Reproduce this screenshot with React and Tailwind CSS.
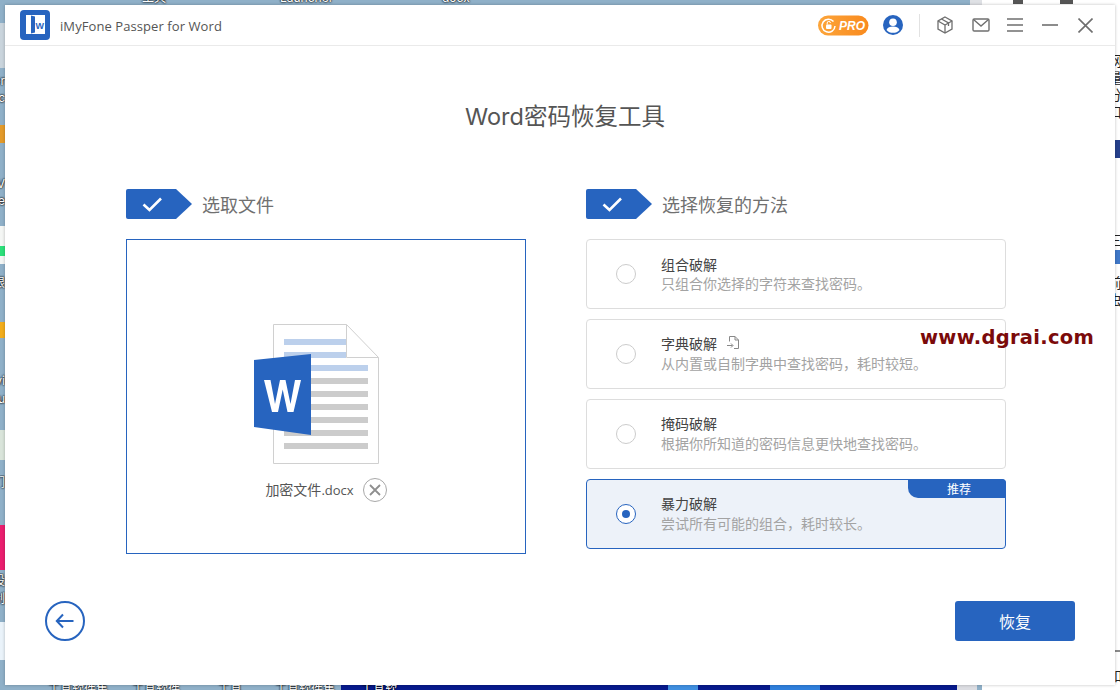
const FONT = "font-['Inter','Noto_Sans_CJK_SC',sans-serif]";

function Check() {
  return (
    <svg width="66" height="30" viewBox="0 0 66 30" className="shrink-0">
      <path d="M2 0H50L66 15L50 30H2A2 2 0 0 1 0 28V2A2 2 0 0 1 2 0Z" fill="#2764bf" />
      <path d="M17.5 15.5L23.5 21L35 9.5" fill="none" stroke="#fff" strokeWidth="2.6" />
    </svg>
  );
}

function StepTitle({ children }) {
  return (
    <div className="flex items-center gap-[10px] h-[30px]">
      <Check />
      <span className="pt-[3px] text-[18px] leading-[30px] text-[#707070]">{children}</span>
    </div>
  );
}

function Method({ title, desc, selected, badge, icon, titleLift }) {
  return (
    <div
      className={`relative flex items-center h-[70px] rounded-[4px] border pl-[29px] ${
        selected ? "border-[#2764bf] bg-[#edf2f9]" : "border-[#dddddd] bg-white"
      }`}
    >
      {selected ? (
        <span className="flex items-center justify-center w-5 h-5 rounded-full border border-[#2764bf] bg-white">
          <span className="w-[8px] h-[8px] rounded-full bg-[#2764bf]" />
        </span>
      ) : (
        <span className="w-5 h-5 rounded-full border border-[#cccccc] bg-white" />
      )}
      <div className="ml-[25px] flex flex-col">
        <div className={`flex items-center gap-[9px] h-[18px] text-[14px] leading-[18px] text-[#444444] ${titleLift ? "-mt-px mb-px" : ""}`}>
          {title}
          {icon && (
            <svg width="14" height="14" viewBox="0 0 14 14" fill="none" stroke="#888888" strokeWidth="1" className="-mt-[3px]">
              <path d="M3.5 5.5V0.5H9L12.5 4V12.5H8" />
              <path d="M9 0.5V4H12.5" />
              <path d="M1 9.5H6.5M5 7.5L7 9.5L5 11.5" />
            </svg>
          )}
        </div>
        <div className="h-[18px] text-[14px] leading-[20px] text-[#a3a3a3] whitespace-nowrap">{desc}</div>
      </div>
      {badge && (
        <div className="absolute -top-px -right-px w-[98px] h-[19px] pl-[4px] rounded-tr-[4px] rounded-bl-[10px] bg-[#2764bf] text-white text-[12px] leading-[21px] text-center">
          {badge}
        </div>
      )}
    </div>
  );
}

function DocIcon() {
  const blue = "#bcd0ec";
  const gray = "#cccccc";
  return (
    <svg width="126" height="142" viewBox="0 0 126 142" className="mr-[19px]">
      <path d="M19.5 0.5H92.5L124.5 33.5V139.5H19.5Z" fill="#fff" stroke="#d0d0d0" strokeWidth="1" />
      <path d="M92.5 0.5V33.5H124.5" fill="none" stroke="#d0d0d0" strokeWidth="1" />
      <rect x="30" y="15" width="62" height="6" fill={blue} />
      <rect x="30" y="28" width="62" height="6" fill={blue} />
      <rect x="30" y="41" width="84" height="6" fill={blue} />
      {[54, 67, 80, 93, 106, 119].map((y) => (
        <rect key={y} x="30" y={y} width="84" height="6" fill={gray} />
      ))}
      <path d="M0 36L57 30V111L0 103Z" fill="#2764bf" />
      <path
        d="M10 56H16.5L21 80L26 56H31.5L36.5 80L41 56H47L39.5 88H33.5L28.7 65.5L24 88H18Z"
        fill="#fff"
      />
    </svg>
  );
}

function TitleIcons() {
  return (
    <div className="flex items-center">
      <svg width="51" height="21" viewBox="0 0 51 21" className="mr-[14px]">
        <defs>
          <linearGradient id="pro" x1="0" x2="1" y1="0" y2="0">
            <stop offset="0" stopColor="#fca53a" />
            <stop offset="1" stopColor="#f98a1e" />
          </linearGradient>
        </defs>
        <rect x="0" y="0.5" width="50.5" height="20" rx="10" fill="url(#pro)" />
        <path d="M15.5 6.5A6.5 6.5 0 1 0 17 11" fill="none" stroke="#fff" strokeWidth="1.5" />
        <rect x="8" y="9.5" width="5.5" height="4.5" rx="1" fill="#fff" />
        <path d="M9.2 9.5V8A1.6 1.6 0 0 1 12.4 8" fill="none" stroke="#fff" strokeWidth="1" />
        <text x="21" y="15" fontFamily="'Liberation Sans',sans-serif" fontStyle="italic" fontWeight="700" fontSize="12" fill="#fff">PRO</text>
      </svg>
      <svg width="20" height="20" viewBox="0 0 20 20" className="mr-[16px]">
        <circle cx="10" cy="10" r="10" fill="#2764bf" />
        <circle cx="10" cy="7.3" r="3.8" fill="#fff" />
        <path d="M3.5 15C4.5 12.3 7 11.6 10 11.6S15.5 12.3 16.5 15C15 17 12.5 17.8 10 17.8S5 17 3.5 15Z" fill="#fff" />
      </svg>
      <span className="w-px h-[23px] bg-[#e2e2e2] mr-[17px]" />
      <svg width="16" height="18" viewBox="0 0 16 18" fill="none" stroke="#6f6f6f" strokeWidth="1.3" className="mr-[19px]">
        <path d="M8 1L15 5V13L8 17L1 13V5Z" />
        <path d="M1 5L8 9L15 5M8 9V17" />
        <path d="M4.5 3L11.5 7V10" />
      </svg>
      <svg width="18" height="14" viewBox="0 0 18 14" fill="none" stroke="#6f6f6f" strokeWidth="1.4" className="mr-[17px]">
        <rect x="1" y="1" width="16" height="12" rx="1.2" />
        <path d="M1.5 1.5L9 8L16.5 1.5" />
      </svg>
      <svg width="16" height="14" viewBox="0 0 16 14" stroke="#6f6f6f" strokeWidth="1.6" className="mr-[19px]">
        <path d="M0 1H16M0 7H16M0 13H16" />
      </svg>
      <svg width="16" height="2" viewBox="0 0 16 2" stroke="#6f6f6f" strokeWidth="1.6" className="mr-[20px]">
        <path d="M0 1H16" />
      </svg>
      <svg width="15" height="15" viewBox="0 0 15 15" stroke="#6f6f6f" strokeWidth="1.6" className="mr-[22px]">
        <path d="M0.5 0.5L14.5 14.5M14.5 0.5L0.5 14.5" />
      </svg>
    </div>
  );
}

const leftLabels = [
  { y: "top-[73px]", t: "er" },
  { y: "top-[90px]", t: "oc" },
  { y: "top-[176px]", t: "V" },
  { y: "top-[193px]", t: "re" },
  { y: "top-[275px]", t: "限" },
  { y: "top-[373px]", t: "vi" },
  { y: "top-[391px]", t: "ru" },
  { y: "top-[475px]", t: "们" },
  { y: "top-[573px]", t: "设" },
  { y: "top-[591px]", t: "制" },
];

const rightGlyphs = [
  { y: "top-[53px]", t: "网" },
  { y: "top-[70px]", t: "量" },
  { y: "top-[87px]", t: "分" },
  { y: "top-[104px]", t: "口" },
  { y: "top-[232px]", t: "三" },
  { y: "top-[275px]", t: "前" },
  { y: "top-[292px]", t: "虫" },
  { y: "top-[668px]", t: "如" },
];

const labelText = "text-[12px] leading-[16px] text-white [text-shadow:0_0_2px_#000,0_0_2px_#000]";

function Desktop() {
  return (
    <div className="absolute inset-0 overflow-hidden bg-[#8fb0c8]">
      <div className="absolute top-0 left-[970px] w-[12px] h-[5px] bg-[#dfe1e5]" />
      <div className="absolute top-0 right-0 w-[138px] h-[690px] bg-white" />
      <div className="absolute left-0 top-[23px] w-[5px] h-[45px] bg-[#c9d4dc]" />
      <div className="absolute left-0 top-[125px] w-[5px] h-[18px] bg-[#e39a2a]" />
      <div className="absolute left-0 top-[226px] w-[5px] h-[38px] bg-[#f4f6f4]" />
      <div className="absolute left-0 top-[246px] w-[5px] h-[10px] bg-[#2ce07a]" />
      <div className="absolute left-0 top-[322px] w-[5px] h-[16px] bg-[#f2ad1c]" />
      <div className="absolute left-0 top-[430px] w-[5px] h-[30px] bg-[#d9e4da]" />
      <div className="absolute left-0 top-[525px] w-[5px] h-[45px] bg-[#ea1e6e]" />
      <div className="absolute left-0 top-[622px] w-[5px] h-[38px] bg-[#eaf3fa]" />
      <div className="absolute left-[341px] top-[685px] w-[616px] h-[5px] bg-[#071a8c]" />
      <div className="absolute left-[668px] top-[685px] w-[30px] h-[5px] bg-[#3f8fe0]" />
      <div className="absolute left-[770px] top-[685px] w-[50px] h-[5px] bg-[#2f7fdc]" />
      <div className="absolute left-[957px] top-[685px] w-[20px] h-[5px] bg-[#dcdde2]" />
      <div className="absolute left-[1013px] top-0 w-[10px] h-[4px] bg-[#555555]" />
      <div className="absolute left-[1060px] top-0 w-[13px] h-[4px] bg-[#555555]" />
      <div className="absolute left-[1115px] top-[140px] w-[5px] h-[18px] bg-[#26408c]" />
      <div className="absolute left-[1115px] top-[250px] w-[5px] h-[14px] bg-[#3f78c8]" />
      <div className="absolute left-[1115px] top-[650px] w-[5px] h-[2px] bg-[#8a8a8a]" />

      {leftLabels.map((l) => (
        <span key={l.y} className={`absolute left-0 ${l.y} w-[5px] flex justify-end overflow-hidden ${labelText}`}>
          <span className="shrink-0">{l.t}</span>
        </span>
      ))}
      {rightGlyphs.map((g) => (
        <span key={g.y} className={`absolute left-[1108px] ${g.y} text-[14px] leading-[16px] text-[#222222]`}>{g.t}</span>
      ))}
      <span className={`absolute left-[142px] -top-[10px] ${labelText}`}>工具</span>
      <span className={`absolute left-[280px] -top-[10px] ${labelText}`}>Launcher</span>
      <span className={`absolute left-[442px] -top-[10px] ${labelText}`}>docx</span>
      <span className={`absolute left-[48px] top-[682px] ${labelText}`}>工具软件集</span>
      <span className={`absolute left-[132px] top-[682px] ${labelText}`}>工具软件</span>
      <span className={`absolute left-[218px] top-[682px] ${labelText}`}>工具</span>
      <span className={`absolute left-[275px] top-[682px] ${labelText}`}>工具软件集</span>
      <span className={`absolute left-[361px] top-[682px] ${labelText}`}>工具软</span>
    </div>
  );
}

export default function App() {
  return (
    <div className={`relative w-[1120px] h-[690px] overflow-hidden ${FONT}`}>
      <Desktop />
      <div className="relative p-[5px] w-full h-full">
        <div className="flex flex-col w-full h-full bg-white shadow-[0_0_3px_rgba(0,0,0,0.25)]">
          <header className="flex items-center justify-between h-[41px] border-b border-[#eaeaea] shrink-0">
            <div className="flex items-center pl-[15px]">
              <svg width="30" height="30" viewBox="0 0 30 30">
                <rect width="30" height="30" rx="4" fill="#2764bf" />
                <path d="M6 5H25V24H6Z" fill="#fff" />
                <path d="M11 5.5L15 6.5V22.5L11 23.5Z" fill="#2764bf" />
                <text x="15.6" y="18.5" fontFamily="'Liberation Sans',sans-serif" fontWeight="700" fontSize="9" fill="#2764bf">W</text>
              </svg>
              <span className="ml-[10px] pt-[3px] text-[13px] text-[#555555] font-['Open_Sans',sans-serif] tracking-[0.08px]">
                iMyFone Passper for Word
              </span>
            </div>
            <TitleIcons />
          </header>

          <main className="relative flex-1 flex flex-col">
            <h1 className="pt-[54px] pl-[10px] h-[143px] text-center text-[23.5px] leading-[34px] font-normal text-[#555555] shrink-0">
              Word密码恢复工具
            </h1>
            <div className="flex gap-[60px] pl-[121px]">
              <section className="w-[400px]">
                <StepTitle>选取文件</StepTitle>
                <div className="mt-[20px] h-[315px] border border-[#2764bf] flex flex-col items-center pt-[84px]">
                  <DocIcon />
                  <div className="flex items-center mt-[11px] h-[26px]">
                    <span className="text-[14px] text-[#555555]">
                      加密文件<span className="text-[13px] font-['Open_Sans',sans-serif]">.docx</span>
                    </span>
                    <span className="ml-[9px] flex items-center justify-center w-[24px] h-[24px] rounded-full border border-[#a8a8a8]">
                      <svg width="12" height="12" viewBox="0 0 12 12" stroke="#8f8f8f" strokeWidth="1.8">
                        <path d="M1 1L11 11M11 1L1 11" />
                      </svg>
                    </span>
                  </div>
                </div>
              </section>
              <section className="w-[420px]">
                <StepTitle>选择恢复的方法</StepTitle>
                <div className="mt-[20px] flex flex-col gap-[10px]">
                  <Method title="组合破解" desc="只组合你选择的字符来查找密码。" />
                  <Method title="字典破解" desc="从内置或自制字典中查找密码，耗时较短。" icon titleLift />
                  <Method title="掩码破解" desc="根据你所知道的密码信息更快地查找密码。" titleLift />
                  <Method title="暴力破解" desc="尝试所有可能的组合，耗时较长。" selected badge="推荐" titleLift />
                </div>
              </section>
            </div>
            <footer className="flex items-center justify-between mt-[47px] pl-[40px] pr-[40px]">
              <button className="flex items-center justify-center w-10 h-10 rounded-full border-2 border-[#2764bf]">
                <svg width="20" height="16" viewBox="0 0 20 16" fill="none" stroke="#2764bf" strokeWidth="2">
                  <path d="M18.5 8H2M8 1.5L1.8 8L8 14.5" />
                </svg>
              </button>
              <button className="w-[120px] h-10 pt-[2px] rounded-[3px] bg-[#2764bf] text-white text-[16px]">恢复</button>
            </footer>
          </main>
        </div>
      </div>
      <div className="absolute left-[920px] top-[326px] text-[19.5px] leading-[24px] font-bold text-[#7b0a0a] font-['DejaVu_Sans',sans-serif] tracking-[0.3px] whitespace-nowrap">
        www.dgrai.com
      </div>
    </div>
  );
}
